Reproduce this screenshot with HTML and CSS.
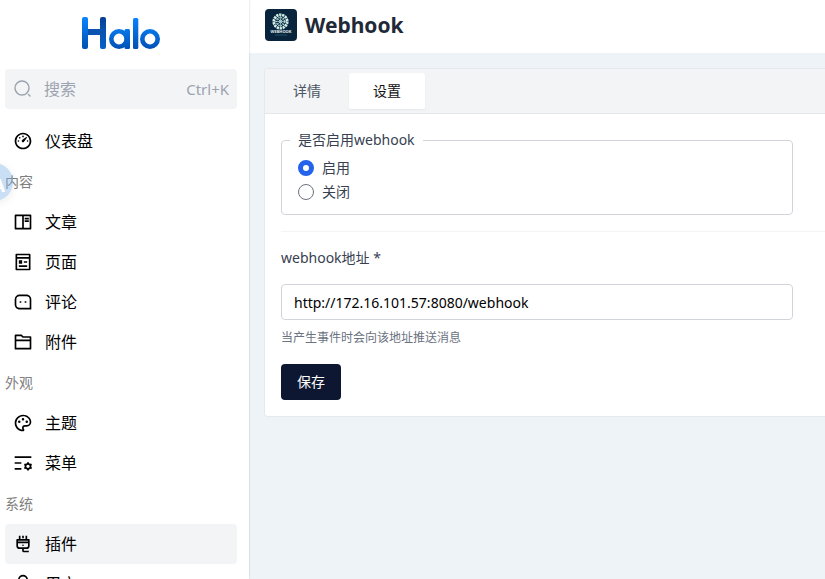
FILE: index.html
```html
<!DOCTYPE html>
<html lang="zh-CN">
<head>
<meta charset="utf-8">
<meta name="viewport" content="width=device-width, initial-scale=1">
<title>Webhook - Halo</title>
<link rel="stylesheet" href="styles.css">
</head>
<body>
<div class="layout">
  <aside class="sidebar">
    <a class="brand" href="#" aria-label="Halo">
      <svg width="80" height="34" viewBox="0 0 80 34" fill="none">
        <defs>
          <linearGradient id="bright" x1="0" y1="1" x2="0" y2="33" gradientUnits="userSpaceOnUse"><stop stop-color="#0a84ff"/><stop offset="1" stop-color="#0050b0"/></linearGradient>
          <linearGradient id="deep" x1="0" y1="1" x2="0" y2="33" gradientUnits="userSpaceOnUse"><stop stop-color="#073f94"/><stop offset=".4" stop-color="#0751ad"/><stop offset="1" stop-color="#0860ca"/></linearGradient>
          <linearGradient id="ring" x1="0" y1="13" x2="0" y2="33" gradientUnits="userSpaceOnUse"><stop stop-color="#0878ea"/><stop offset="1" stop-color="#0050b4"/></linearGradient>
        </defs>
        <rect x="19" y="1" width="6" height="32" rx="2" fill="url(#deep)"/>
        <rect x="3" y="13" width="21" height="6" fill="#0854b0"/>
        <rect x="1" y="1" width="6" height="32" rx="2" fill="url(#bright)"/>
        <circle cx="38" cy="23" r="7.7" stroke="url(#ring)" stroke-width="4.6"/>
        <rect x="43.500" y="13" width="5.500" height="20" rx="1.500" fill="url(#ring)"/>
        <rect x="52" y="2" width="5.300" height="31" rx="1.500" fill="url(#bright)"/>
        <circle cx="69" cy="23" r="7.700" stroke="url(#ring)" stroke-width="4.600"/>
      </svg>
    </a>
    <button class="search" type="button">
      <svg width="20" height="20" viewBox="0 0 20 20" fill="none" stroke="currentColor" stroke-width="1.400" stroke-linecap="round"><circle cx="9" cy="9" r="7"/><path d="M15.500 15.500l1.500 1.500"/></svg>
      <span>搜索</span>
      <kbd>Ctrl+K</kbd>
    </button>
    <nav class="menu">
      <a class="item" href="#"><svg viewBox="0 0 24 24"><path d="M12 2c5.523 0 10 4.477 10 10s-4.477 10-10 10S2 17.523 2 12 6.477 2 12 2zm0 2a8 8 0 1 0 0 16 8 8 0 0 0 0-16zm3.833 3.337a.596.596 0 0 1 .763.067.59.59 0 0 1 .063.76c-2.18 3.046-3.38 4.678-3.598 4.897a1.5 1.5 0 0 1-2.122-2.122c.374-.373 2.005-1.574 4.894-3.602zM17.500 11a1 1 0 1 1 0 2 1 1 0 0 1 0-2zm-11 0a1 1 0 1 1 0 2 1 1 0 0 1 0-2zm2.318-3.596a1 1 0 1 1-1.414 1.414 1 1 0 0 1 1.414-1.414zM12 5.500a1 1 0 1 1 0 2 1 1 0 0 1 0-2z"/></svg>仪表盘</a>
      <h2 class="group">内容</h2>
      <a class="item" href="#"><svg viewBox="0 0 24 24"><path d="M2 3.993A1 1 0 0 1 2.992 3h18.016c.548 0 .992.445.992.993v16.014a1 1 0 0 1-.992.993H2.992A.993.993 0 0 1 2 20.007V3.993zM11 5H4v14h7V5zm2 0v14h7V5h-7zm1 2h5v2h-5V7zm0 3h5v2h-5v-2z"/></svg>文章</a>
      <a class="item" href="#"><svg viewBox="0 0 24 24"><path d="M5 8v12h14V8H5zm0-2h14V4H5v2zm15 16H4a1 1 0 0 1-1-1V3a1 1 0 0 1 1-1h16a1 1 0 0 1 1 1v18a1 1 0 0 1-1 1zM7 10h4v4H7v-4zm0 6h10v2H7v-2zm6-5h4v2h-4v-2z"/></svg>页面</a>
      <a class="item" href="#"><svg viewBox="0 0 24 24"><path d="M2 8.994A5.990 5.990 0 0 1 8 3h8c3.313 0 6 2.695 6 5.994V21H8c-3.313 0-6-2.695-6-5.994V8.994zM20 19V8.994A4.004 4.004 0 0 0 16 5H8a3.990 3.990 0 0 0-4 3.994v6.012A4.004 4.004 0 0 0 8 19h12zm-6-8h2v2h-2v-2zm-6 0h2v2H8v-2z"/></svg>评论</a>
      <a class="item" href="#"><svg viewBox="0 0 24 24"><path d="M12.414 5H21a1 1 0 0 1 1 1v14a1 1 0 0 1-1 1H3a1 1 0 0 1-1-1V4a1 1 0 0 1 1-1h7.414l2 2zM20 11H4v8h16v-8zm0-2V7h-8.414l-2-2H4v4h16z"/></svg>附件</a>
      <h2 class="group">外观</h2>
      <a class="item" href="#"><svg viewBox="0 0 24 24"><path d="M12 2c5.522 0 10 3.978 10 8.889a5.558 5.558 0 0 1-5.556 5.555h-1.966c-.922 0-1.667.745-1.667 1.667 0 .422.167.811.422 1.100.267.300.434.689.434 1.122C13.667 21.256 12.900 22 12 22 6.478 22 2 17.522 2 12S6.478 2 12 2zm-1.189 16.111a3.664 3.664 0 0 1 3.667-3.667h1.966A3.558 3.558 0 0 0 20 10.890C20 7.139 16.468 4 12 4a8 8 0 0 0-.676 15.972 3.648 3.648 0 0 1-.513-1.860zM7.500 12a1.500 1.500 0 1 1 0-3 1.500 1.500 0 0 1 0 3zm9 0a1.500 1.500 0 1 1 0-3 1.500 1.500 0 0 1 0 3zM12 9a1.500 1.500 0 1 1 0-3 1.500 1.500 0 0 1 0 3z"/></svg>主题</a>
      <a class="item" href="#"><svg viewBox="0 0 24 24"><path fill-rule="evenodd" d="M2 18h8v2H2v-2zm0-7h8v2H2v-2zm0-7h20v2H2V4zm18.674 9.025l1.156-.391 1 1.732-.916.805a4 4 0 0 1 0 1.658l.916.805-1 1.732-1.156-.391a4 4 0 0 1-1.452.829L19 21h-2l-.222-1.196a4 4 0 0 1-1.452-.829l-1.156.391-1-1.732.916-.805a4 4 0 0 1 0-1.658l-.916-.805 1-1.732 1.156.391a4 4 0 0 1 1.452-.829L17 11h2l.222 1.196a4 4 0 0 1 1.452.829zM18 18a2 2 0 1 0 0-4 2 2 0 0 0 0 4z"/></svg>菜单</a>
      <h2 class="group">系统</h2>
      <a class="item active" href="#" aria-current="page"><svg viewBox="0 0 24 24"><path d="M13 18v2h6v2h-6a2 2 0 0 1-2-2v-2H8a4 4 0 0 1-4-4V7a1 1 0 0 1 1-1h2V2h2v4h6V2h2v4h2a1 1 0 0 1 1 1v7a4 4 0 0 1-4 4h-3zm-5-2h8a2 2 0 0 0 2-2v-3H6v3a2 2 0 0 0 2 2zm10-8H6v1h12V8zm-6 6.500a1 1 0 1 1 0-2 1 1 0 0 1 0 2zM11 2h2v3h-2V2z"/></svg>插件</a>
      <a class="item" href="#"><svg viewBox="0 0 24 24"><path d="M20 22h-2v-2a3 3 0 0 0-3-3H9a3 3 0 0 0-3 3v2H4v-2a5 5 0 0 1 5-5h6a5 5 0 0 1 5 5v2zm-8-9a6 6 0 1 1 0-12 6 6 0 0 1 0 12zm0-2a4 4 0 1 0 0-8 4 4 0 0 0 0 8z"/></svg>用户</a>
    </nav>
  </aside>

  <main class="main">
    <header class="header">
      <svg class="plugin-logo" viewBox="0 0 32 32" aria-hidden="true">
        <rect width="32" height="32" fill="#08243c"/>
        <g fill="none" stroke="#d5eeea">
          <circle cx="15.500" cy="12.500" r="6.700" stroke-width="2.800" stroke-dasharray="2.300 .7"/>
          <circle cx="15.500" cy="12.500" r="4" stroke="#9dc9ca" stroke-width="1.600" stroke-dasharray="1.500 .8"/>
          <circle cx="15.500" cy="12.500" r="1.500" stroke-width="1"/>
          <path d="M11 8l9 9M20 8l-9 9M15.500 5v15M9 12.500h13" stroke="#b5dcda" stroke-width=".6"/>
          <path d="M10 26h12" stroke="#37747a" stroke-width=".6"/>
        </g>
        <text class="logo-text" x="16" y="24" text-anchor="middle">WEBHOOK</text>
      </svg>
      <h1>Webhook</h1>
    </header>

    <section class="card">
      <div class="tabs" role="tablist">
        <button class="tab" type="button" role="tab" aria-selected="false">详情</button>
        <button class="tab selected" type="button" role="tab" aria-selected="true">设置</button>
      </div>
      <form class="form">
        <div class="row">
          <fieldset class="choices">
            <legend>是否启用webhook</legend>
            <label><input type="radio" name="enabled" checked>启用</label>
            <label><input type="radio" name="enabled">关闭</label>
          </fieldset>
        </div>
        <div class="row">
          <label class="label" for="url">webhook地址 *</label>
          <input class="field" id="url" type="text" value="http://172.16.101.57:8080/webhook">
          <p class="help">当产生事件时会向该地址推送消息</p>
        </div>
        <button class="save" type="button">保存</button>
      </form>
    </section>
  </main>
</div>
<div class="bubble" aria-hidden="true">A</div>
</body>
</html>
```
FILE: styles.css
```css
* {
  box-sizing: border-box;
}

body {
  margin: 0;
  font-family: "Noto Sans", "Noto Sans CJK SC", sans-serif;
  font-size: 14px;
  line-height: 20px;
  color: #374151;
  background: #eef3f8;
}

button,
input,
kbd {
  font: inherit;
}

h1,
h2,
p {
  margin: 0;
}

.layout {
  display: flex;
  height: 100vh;
  overflow: hidden;
}

.sidebar {
  flex: none;
  width: 249px;
  padding: 16px 12px 0 5px;
  background: #fff;
  box-shadow: 0 0 2px rgba(0, 0, 0, 0.2);
  overflow: hidden;
  z-index: 1;
}

.brand {
  display: flex;
  justify-content: center;
  margin-bottom: 19px;
}

.search {
  display: flex;
  align-items: center;
  width: 100%;
  height: 40px;
  padding: 0 8px;
  border: 0;
  border-radius: 4px;
  background: #f3f4f6;
  color: #9ca3af;
  font-size: 16px;
}

.search svg {
  margin-right: 11px;
}

.search kbd {
  margin-left: auto;
  font-size: 15px;
}

.menu {
  margin-top: 12px;
}

.item {
  display: flex;
  align-items: center;
  gap: 12px;
  height: 40px;
  padding: 0 8px;
  border-radius: 4px;
  color: #000;
  font-size: 16px;
  text-decoration: none;
}

.item svg {
  width: 20px;
  height: 20px;
  fill: currentColor;
}

.item.active {
  background: #f3f4f6;
}

.group {
  height: 41px;
  font-size: 14px;
  font-weight: 400;
  line-height: 41px;
  color: #808080;
}

.main {
  flex: 1;
  min-width: 0;
}

.header {
  display: flex;
  align-items: center;
  gap: 8px;
  padding: 9px 16px 12px;
  background: #fff;
}

.plugin-logo {
  width: 32px;
  height: 32px;
  border-radius: 4px;
}

.logo-text {
  font-size: 4px;
  font-weight: 700;
  fill: #e2f2ef;
}

.header h1 {
  font-size: 21px;
  font-weight: 700;
  line-height: 28px;
  color: #1f2937;
}

.card {
  margin: 15px 0 0 15px;
  border: 1px solid #e5e9ee;
  border-right: 0;
  border-radius: 4px 0 0 4px;
  background: #fff;
  overflow: hidden;
}

.tabs {
  display: flex;
  gap: 4px;
  padding: 4px;
  background: #f3f4f6;
  border-bottom: 1px solid #e5e7eb;
}

.tab {
  height: 36px;
  padding: 0 24px;
  border: 0;
  border-radius: 2px;
  background: transparent;
  color: #4b5563;
}

.tab.selected {
  background: #fff;
  color: #111;
  box-shadow: 0 1px 2px rgba(0, 0, 0, 0.05);
}

.form {
  padding: 0 0 16px 16px;
}

.row {
  padding: 16px 0;
}

.row + .row {
  border-top: 1px solid #f3f4f6;
}

.choices {
  display: flex;
  flex-direction: column;
  gap: 4px;
  max-width: 512px;
  margin: 0;
  padding: 8px 16px 12px;
  border: 1px solid #d1d5db;
  border-radius: 4px;
}

.choices legend {
  margin-left: -8px;
  padding: 0 8px;
}

.choices label {
  display: flex;
  align-items: center;
  gap: 8px;
}

.choices input {
  appearance: none;
  width: 16px;
  height: 16px;
  margin: 0;
  border: 1px solid #6b7280;
  border-radius: 50%;
  background: #fff;
}

.choices input:checked {
  border: 5px solid #2563eb;
}

.label {
  display: block;
  margin-bottom: 16px;
}

.field {
  display: block;
  width: 100%;
  max-width: 512px;
  height: 36px;
  padding: 0 12px;
  border: 1px solid #d1d5db;
  border-radius: 4px;
  background: #fff;
  color: #000;
}

.help {
  margin-top: 8px;
  font-size: 12px;
  line-height: 20px;
  color: #6b7280;
}

.save {
  height: 36px;
  padding: 0 16px;
  border: 0;
  border-radius: 4px;
  background: #0e1731;
  color: #fff;
}

.bubble {
  position: absolute;
  top: 163px;
  left: -25px;
  width: 38px;
  height: 38px;
  border-radius: 50%;
  background: rgba(120, 175, 230, 0.4);
  box-shadow: 0 2px 8px rgba(0, 0, 0, 0.08);
  color: #fff;
  font-size: 18px;
  font-weight: 700;
  line-height: 44px;
  text-align: right;
  padding-right: 8px;
  z-index: 2;
}
```
